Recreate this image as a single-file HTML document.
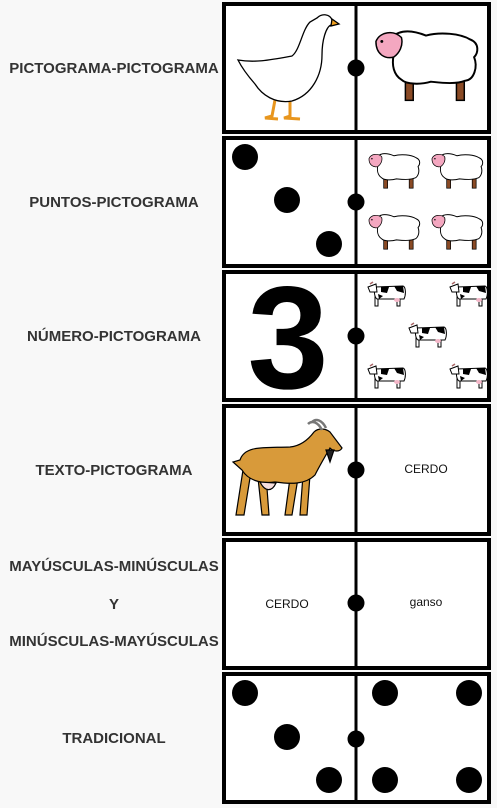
<!DOCTYPE html>
<html><head><meta charset="utf-8"><style>
html,body{margin:0;padding:0;background:#f8f8f8;width:497px;height:808px;overflow:hidden}
svg{display:block}
text.l{font-family:"Liberation Sans",sans-serif;font-weight:bold;font-size:15px;fill:#333;text-anchor:middle}
text.w{font-family:"Liberation Sans",sans-serif;font-size:12px;fill:#111;text-anchor:middle}
</style></head><body>
<svg width="497" height="808" viewBox="0 0 497 808" xmlns="http://www.w3.org/2000/svg">
<defs>
<symbol id="sheep" viewBox="0 0 110 80">
<rect x="34" y="52" width="8" height="24" fill="#8a4a25" stroke="#000" stroke-width="1.5"/>
<rect x="86" y="52" width="8" height="24" fill="#8a4a25" stroke="#000" stroke-width="1.5"/>
<path d="M20 12 C30 2 45 6 55 10 C70 6 90 8 100 14 C110 18 108 28 104 32 C108 42 104 55 95 56 C85 60 70 58 60 57 C50 60 35 60 30 55 C22 50 20 40 22 30 C16 26 14 18 20 12Z" fill="#fff" stroke="#000" stroke-width="2"/>
<path d="M4 16 C8 6 22 4 30 12 C32 20 28 28 22 32 C14 34 4 30 4 16Z" fill="#f4a7c0" stroke="#000" stroke-width="1.5"/>
<circle cx="10" cy="16" r="1.5"/>
</symbol>
<symbol id="cow" viewBox="0 0 40 26">
<rect x="8" y="14" width="3" height="11" fill="#fff" stroke="#000" stroke-width="1"/>
<rect x="30" y="14" width="3" height="11" fill="#fff" stroke="#000" stroke-width="1"/>
<path d="M8 6 L36 5 C39 6 39 14 37 18 L10 18 C7 16 7 9 8 6Z" fill="#fff" stroke="#000" stroke-width="1"/>
<path d="M14 6 L22 6 L20 12 L14 11Z M27 5 L36 5 L37 12 L30 10Z M11 13 L16 15 L12 18Z"/>
<ellipse cx="30" cy="19" rx="3" ry="2" fill="#f4b6c8"/>
<path d="M1 6 L9 3 L10 11 L3 11Z" fill="#fff" stroke="#000" stroke-width="1"/>
<path d="M3 3 L6 1" stroke="#a66" stroke-width="1.5"/>
</symbol>
</defs>

<text class="l" x="114" y="73">PICTOGRAMA-PICTOGRAMA</text>
<text class="l" x="114" y="207">PUNTOS-PICTOGRAMA</text>
<text class="l" x="114" y="341">NÚMERO-PICTOGRAMA</text>
<text class="l" x="114" y="475">TEXTO-PICTOGRAMA</text>
<text class="l" x="114" y="571">MAYÚSCULAS-MINÚSCULAS</text>
<text class="l" x="114" y="609">Y</text>
<text class="l" x="114" y="646">MINÚSCULAS-MAYÚSCULAS</text>
<text class="l" x="114" y="743">TRADICIONAL</text>

<g fill="#fff" stroke="#000" stroke-width="4">
<rect x="224" y="4" width="265" height="128"/>
<rect x="224" y="138" width="265" height="128"/>
<rect x="224" y="272" width="265" height="128"/>
<rect x="224" y="406" width="265" height="128"/>
<rect x="224" y="540" width="265" height="128"/>
<rect x="224" y="674" width="265" height="128"/>
</g>
<g stroke="#000" stroke-width="3">
<line x1="356" y1="4" x2="356" y2="132"/><line x1="356" y1="138" x2="356" y2="266"/>
<line x1="356" y1="272" x2="356" y2="400"/><line x1="356" y1="406" x2="356" y2="534"/>
<line x1="356" y1="540" x2="356" y2="668"/><line x1="356" y1="674" x2="356" y2="802"/>
</g>
<g fill="#000">
<circle cx="356" cy="68" r="8.5"/><circle cx="356" cy="202" r="8.5"/>
<circle cx="356" cy="336" r="8.5"/><circle cx="356" cy="470" r="8.5"/>
<circle cx="356" cy="603" r="8.5"/><circle cx="356" cy="739" r="8.5"/>
<circle cx="245" cy="157" r="13"/><circle cx="287" cy="200" r="13"/><circle cx="329" cy="244" r="13"/>
<circle cx="245" cy="693" r="13"/><circle cx="287" cy="737" r="13"/><circle cx="329" cy="780" r="13"/>
<circle cx="385" cy="693" r="13"/><circle cx="469" cy="693" r="13"/>
<circle cx="385" cy="780" r="13"/><circle cx="469" cy="780" r="13"/>
</g>

<!-- goose -->
<g stroke="#000" stroke-width="1.3">
<path d="M275 100 L272 116 L265 118 L278 119 M290 100 L290 116 L284 118 L300 119" stroke="#e8961e" stroke-width="3" fill="none"/>
<path d="M317 18 C322 13 330 14 332 20 L338 24 L331 25 C326 27 322 40 322 55 C322 75 312 95 292 101 C275 104 262 95 255 84 C248 76 242 68 238 60 C255 63 270 60 292 56 C300 50 302 30 310 22Z" fill="#fff"/>
<path d="M332 19 L339 24 L331 26Z" fill="#f0a020"/>
</g>
<use href="#sheep" x="372" y="22" width="108" height="86"/>
<use href="#sheep" x="367" y="148" width="54" height="45"/>
<use href="#sheep" x="430" y="148" width="54" height="45"/>
<use href="#sheep" x="367" y="209" width="54" height="45"/>
<use href="#sheep" x="430" y="209" width="54" height="45"/>

<text x="288" y="388" font-family="Liberation Sans,sans-serif" font-weight="bold" font-size="146" text-anchor="middle" fill="#000">3</text>
<use href="#cow" x="367" y="281" width="40" height="26"/>
<use href="#cow" x="449" y="281" width="40" height="26"/>
<use href="#cow" x="408" y="322" width="40" height="26"/>
<use href="#cow" x="367" y="363" width="40" height="26"/>
<use href="#cow" x="449" y="363" width="40" height="26"/>

<g stroke="#000" stroke-width="1.2" fill="#d89a3a">
<path d="M243 470 L236 515 L244 515 L250 478 M258 478 L262 515 L269 515 L266 475 M290 478 L285 515 L292 515 L298 478 M303 475 L300 515 L307 515 L310 475"/>
<path d="M240 460 C245 445 265 448 290 447 C300 446 308 440 314 432 C318 428 325 428 330 432 L342 448 C340 452 334 452 330 448 C326 455 320 465 315 475 C305 485 290 484 275 482 C260 484 248 480 242 470 L233 462Z"/>
<path d="M260 482 C265 492 272 492 276 483Z" fill="#f6dede"/>
<path d="M322 430 C318 422 312 420 308 424 M326 428 C322 420 316 418 312 422" fill="none" stroke="#777" stroke-width="2.5"/>
<path d="M326 450 L330 462 L334 450Z" fill="#222"/>
</g>

<text class="w" x="426" y="473">CERDO</text>
<text class="w" x="287" y="608">CERDO</text>
<text class="w" x="426" y="606">ganso</text>
</svg>
</body></html>
